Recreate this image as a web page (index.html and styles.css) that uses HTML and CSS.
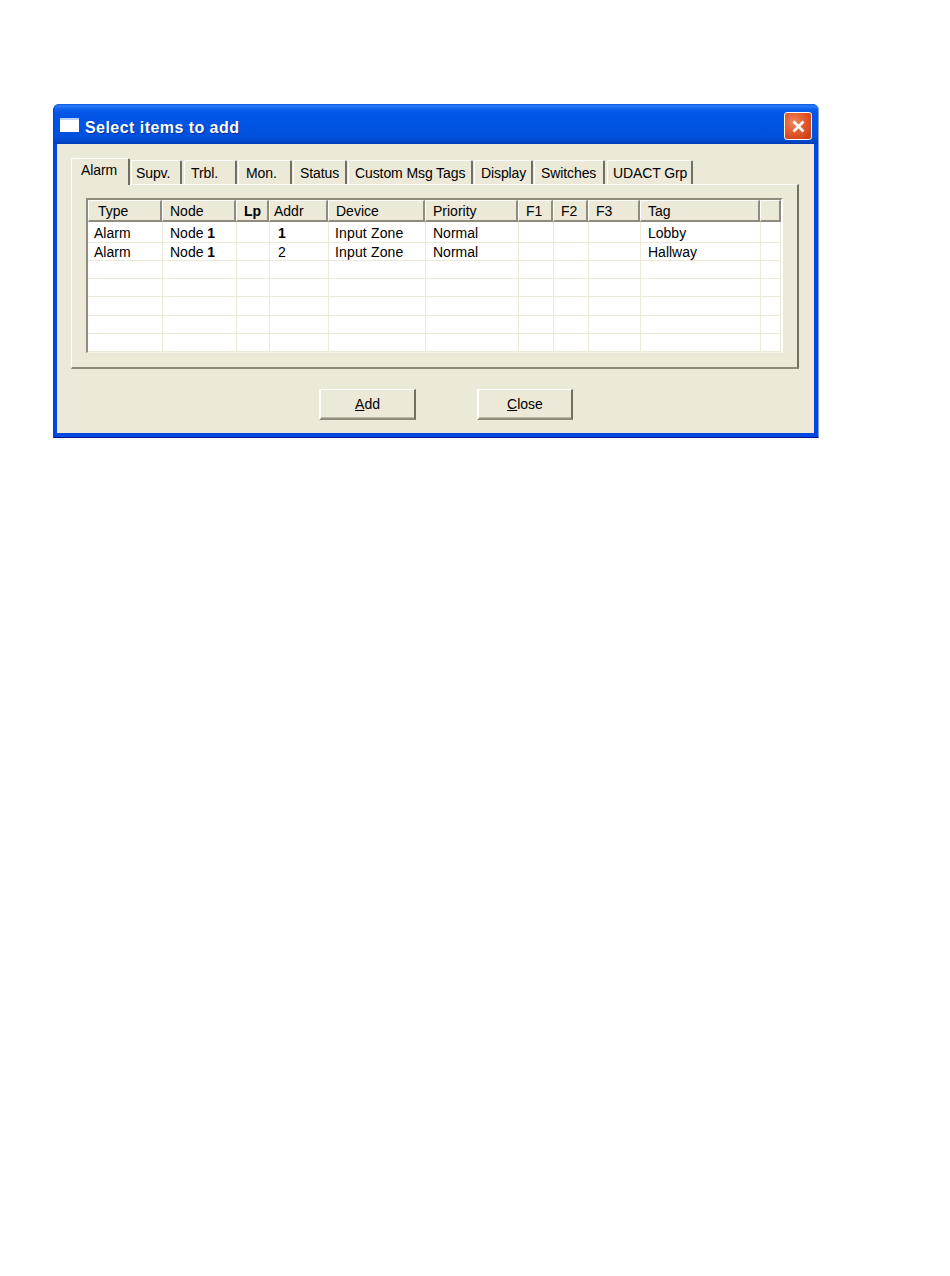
FILE: index.html
```html
<!DOCTYPE html>
<html lang="en">
<head>
<meta charset="utf-8">
<title>Select items to add</title>
<link rel="stylesheet" href="styles.css">
</head>
<body>
<div class="window">
  <div class="titlebar">
    <span class="app-icon"></span>
    <span class="title">Select items to add</span>
    <span class="close-btn">
      <svg width="15" height="15" viewBox="0 0 15 15"><path d="M2.5 2.5 L12.5 12.5 M12.5 2.5 L2.5 12.5" stroke="#fff" stroke-width="2.6" fill="none"/></svg>
    </span>
  </div>
  <div class="client">
    <div class="tabs">
      <div class="tab active t1">Alarm</div>
      <div class="tab t2">Supv.</div>
      <div class="tab t3">Trbl.</div>
      <div class="tab t4">Mon.</div>
      <div class="tab t5">Status</div>
      <div class="tab t6">Custom Msg Tags</div>
      <div class="tab t7">Display</div>
      <div class="tab t8">Switches</div>
      <div class="tab t9">UDACT Grp</div>
    </div>
    <div class="panel">
      <div class="list">
        <div class="head">
          <div class="hc first">Type</div>
          <div class="hc">Node</div>
          <div class="hc"><b>Lp</b></div>
          <div class="hc addr">Addr</div>
          <div class="hc">Device</div>
          <div class="hc">Priority</div>
          <div class="hc">F1</div>
          <div class="hc">F2</div>
          <div class="hc">F3</div>
          <div class="hc">Tag</div>
          <div class="hc"></div>
        </div>
        <div class="row top">
          <div class="c first">Alarm</div><div class="c">Node <b>1</b></div><div class="c"></div><div class="c addr"><b>1</b></div><div class="c">Input Zone</div><div class="c">Normal</div><div class="c"></div><div class="c"></div><div class="c"></div><div class="c">Lobby</div><div class="c"></div>
        </div>
        <div class="row">
          <div class="c first">Alarm</div><div class="c">Node <b>1</b></div><div class="c"></div><div class="c addr">2</div><div class="c">Input Zone</div><div class="c">Normal</div><div class="c"></div><div class="c"></div><div class="c"></div><div class="c">Hallway</div><div class="c"></div>
        </div>
        <div class="row"><div class="c"></div><div class="c"></div><div class="c"></div><div class="c"></div><div class="c"></div><div class="c"></div><div class="c"></div><div class="c"></div><div class="c"></div><div class="c"></div><div class="c"></div></div>
        <div class="row"><div class="c"></div><div class="c"></div><div class="c"></div><div class="c"></div><div class="c"></div><div class="c"></div><div class="c"></div><div class="c"></div><div class="c"></div><div class="c"></div><div class="c"></div></div>
        <div class="row tall"><div class="c"></div><div class="c"></div><div class="c"></div><div class="c"></div><div class="c"></div><div class="c"></div><div class="c"></div><div class="c"></div><div class="c"></div><div class="c"></div><div class="c"></div></div>
        <div class="row"><div class="c"></div><div class="c"></div><div class="c"></div><div class="c"></div><div class="c"></div><div class="c"></div><div class="c"></div><div class="c"></div><div class="c"></div><div class="c"></div><div class="c"></div></div>
        <div class="row"><div class="c"></div><div class="c"></div><div class="c"></div><div class="c"></div><div class="c"></div><div class="c"></div><div class="c"></div><div class="c"></div><div class="c"></div><div class="c"></div><div class="c"></div></div>
      </div>
    </div>
    <div class="buttons">
      <div class="btn add"><span><u>A</u>dd</span></div>
      <div class="btn"><span><u>C</u>lose</span></div>
    </div>
  </div>
</div>
</body>
</html>
```
FILE: styles.css
```css
* { box-sizing: border-box; }
html, body { margin: 0; background: #fff; }
body {
  padding: 104px 0 0 53px;
  height: 1276px;
  overflow: hidden;
  font-family: "Liberation Sans", Arial, sans-serif;
  font-size: 14px;
  color: #000;
}
.window {
  width: 766px;
  height: 334px;
  background: #0148e0;
  border-radius: 6px 6px 0 0;
  border-left: 1px solid #0a3fc0;
  border-right: 1px solid #8a9ed8;
  border-bottom: 1px solid #00138c;
  padding: 0 4px 4px 3px;
  display: flex;
  flex-direction: column;
}
.titlebar {
  height: 40px;
  flex: none;
  margin: 0 -4px 0 -3px;
  padding: 0 6px 0 6px;
  border-radius: 6px 6px 0 0;
  display: flex;
  align-items: center;
  background: linear-gradient(to bottom, #0a5be4 0, #2f7bf5 2px, #0f63ee 5px, #0255e6 9px, #0054e3 22px, #0050dc 33px, #0048cc 37px, #003bb4 40px);
}
.app-icon {
  width: 19px;
  height: 14px;
  margin-top: 2px;
  background: #fff;
  border-top: 2px solid #b9d2f7;
  flex: none;
}
.title {
  margin: 8px 0 0 6px;
  color: #fff;
  font-weight: 700;
  font-size: 16px;
  letter-spacing: 0.45px;
  text-shadow: 1px 1px 0 #0a2f9c;
  flex: 1;
}
.close-btn {
  width: 28px;
  height: 28px;
  margin-top: 4px;
  flex: none;
  display: flex;
  align-items: center;
  justify-content: center;
  border: 1px solid #fff;
  border-radius: 3px;
  background: radial-gradient(circle at 35% 35%, #ee8a62 0, #e25a2e 45%, #c9360e 100%);
}
.client {
  flex: 1;
  background: #ece9d8;
  padding: 14px 15px 0 14px;
}
.tabs {
  display: flex;
  height: 26px;
  position: relative;
  z-index: 1;
}
.tab {
  height: 24px;
  margin-top: 2px;
  background: #ece9d8;
  border-top: 1px solid #fff;
  border-left: 1px solid #fff;
  border-right: 2px solid #716f64;
  border-radius: 2px 2px 0 0;
  padding: 3px 0 0 5px;
  line-height: 18px;
  white-space: nowrap;
  flex: none;
  margin-right: 1px;
  letter-spacing: -0.1px;
}
.tab.active {
  height: 27px;
  margin-top: 0;
  padding: 2px 0 0 9px;
  width: 59px;
}
.t2 { width: 51px; margin-right: 2px; padding-left: 4px; }
.t3 { width: 53px; padding-left: 6px; }
.t4 { width: 54px; padding-left: 7px; }
.t5 { width: 54px; padding-left: 6px; }
.t6 { width: 125px; padding-left: 6px; }
.t7 { width: 59px; padding-left: 6px; }
.t8 { width: 71px; padding-left: 6px; margin-right: 2px; }
.t9 { width: 86px; padding-left: 5px; }
.panel {
  height: 185px;
  border-top: 1px solid #fff;
  border-left: 1px solid #fff;
  border-right: 2px solid #716f64;
  border-bottom: 2px solid #8f8c7e;
  padding: 13px 15px 0 14px;
}
.list {
  width: 697px;
  height: 155px;
  background: #fff;
  border-top: 2px solid #8f8c7e;
  border-left: 2px solid #8f8c7e;
  border-right: 2px solid #fff;
  border-bottom: 1px solid #f4f2e8;
}
.head, .row {
  display: grid;
  grid-template-columns: 74px 74px 33px 59px 97px 93px 35px 35px 52px 120px 21px;
}
.row { grid-template-columns: 75px 74px 33px 59px 97px 93px 35px 35px 52px 120px 20px; }
.head { height: 22px; background: #ece9d8; }
.hc {
  border-top: 1px solid #fff;
  border-left: 1px solid #fff;
  border-right: 2px solid #8f8c7e;
  border-bottom: 2px solid #8f8c7e;
  padding-left: 7px;
  line-height: 21px;
  white-space: nowrap;
  overflow: hidden;
}
.hc.first { padding-left: 9px; }
.hc.addr { padding-left: 4px; }
.row { height: 18px; }
.row.top { height: 21px; }
.row.tall { height: 19px; }
.c {
  border-right: 1px solid #ece9d8;
  border-bottom: 1px solid #ece9d8;
  padding-left: 7px;
  line-height: 18px;
  white-space: nowrap;
  overflow: hidden;
}
.row.top .c { line-height: 23px; }
.c.first { padding-left: 6px; }
.c.addr { padding-left: 8px; }
.c:nth-child(5) { padding-left: 6px; letter-spacing: 0.15px; }
.buttons {
  display: flex;
  gap: 61px;
  padding-left: 248px;
  margin-top: 20px;
}
.btn {
  width: 96px;
  height: 31px;
  background: #ece9d8;
  border-top: 1px solid #fff;
  border-left: 2px solid #fff;
  border-right: 2px solid #716f64;
  border-bottom: 2px solid #8f8c7e;
  box-shadow: inset 0 -1px 0 #bdbaa9;
  display: flex;
  align-items: center;
  justify-content: center;
}
.btn.add { width: 97px; }
```
